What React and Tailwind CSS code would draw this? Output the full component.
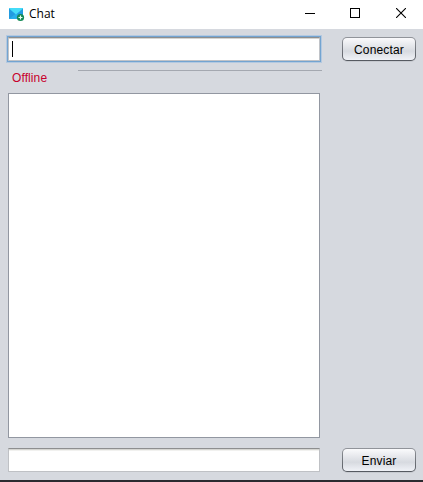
function MailIcon() {
  return (
    <svg width="16" height="14" viewBox="0 0 16 14" className="mt-px shrink-0">
      <rect x="0" y="0" width="14" height="11" rx="0.6" fill="#229be0" />
      <path d="M0 11 L7 5.5 L14 11Z" fill="#28aeea" />
      <path d="M0 0.5 Q0 0 0.6 0 H13.4 Q14 0 14 0.5 L7 6.5Z" fill="#45dcf8" />
      <circle cx="11.5" cy="9.5" r="3.6" fill="#138a55" />
      <path d="M11.5 7.5V11.5M9.5 9.5H13.5" stroke="#e9fff3" strokeWidth="1.2" />
    </svg>
  );
}

function TitleBar() {
  return (
    <header className="flex h-[29px] shrink-0 items-start bg-white pl-[9px]">
      <div className="flex h-7 flex-1 items-center gap-1">
        <MailIcon />
        <h1 className="font-['Open_Sans','Noto_Sans',sans-serif] text-[12px] leading-4 text-black">Chat</h1>
      </div>
      <div className="flex h-[26px] items-center pr-[17px] text-black">
        <svg width="10" height="10" viewBox="0 0 10 10" shapeRendering="crispEdges">
          <rect x="0" y="5" width="10" height="1" fill="currentColor" />
        </svg>
        <svg width="10" height="10" viewBox="0 0 10 10" shapeRendering="crispEdges" className="ml-[35px]">
          <rect x="0.5" y="0.5" width="9" height="9" fill="none" stroke="currentColor" />
        </svg>
        <svg width="10" height="10" viewBox="0 0 10 10" className="ml-9">
          <path d="M0 0L10 10M10 0L0 10" stroke="currentColor" strokeWidth="1.1" />
        </svg>
      </div>
    </header>
  );
}

function NimbusButton({ children }) {
  return (
    <button className="h-6 w-[74px] shrink-0 rounded-[5px] bg-linear-to-b from-[#92959b] to-[#555960] p-px text-[12px] tracking-[0.15px] text-black shadow-[0_1px_0_#c7cad0]">
      <span className="flex h-full items-center justify-center rounded-[4px] bg-linear-to-b from-[#fafafc] via-[#d7dae0] via-60% to-[#f0f2f7] pt-px">
        {children}
      </span>
    </button>
  );
}

export default function App() {
  return (
    <div className="flex h-[482px] w-[423px] flex-col overflow-hidden border-b-2 border-[#2b2b30] bg-[#d6d9df] font-['Liberation_Sans',Arial,sans-serif]">
      <TitleBar />
      <main className="flex flex-1 flex-col pt-2 pr-[7px] pl-2">
        <div className="flex h-6 gap-[22px]">
          <div className="flex w-[312px] shrink-0 border border-t-[#8d8e8f] border-r-[#c0c3c8] border-b-[#c0c3c8] border-l-[#c0c3c8] bg-white pt-[3px] pl-[3px] shadow-[inset_0_1px_0_#d5d5d1,0_0_0_1px_#73a4d1,0_0_0_2px_#b4c9e0]">
            <span className="h-4 w-px bg-black" />
          </div>
          <NimbusButton>Conectar</NimbusButton>
        </div>
        <div className="flex h-8 w-[314px] items-start pl-1">
          <span className="w-[66px] pt-[9px] text-[12px] leading-4 tracking-[0.1px] text-[#c8002c]">Offline</span>
          <span className="mt-[9px] h-px flex-1 bg-[#a4a8b0]" />
        </div>
        <section className="h-[345px] w-[312px] border border-[#9297a1] bg-white" />
        <div className="mt-[10px] flex h-6 gap-[22px]">
          <div className="w-[312px] shrink-0 border border-t-[#8d8e8f] border-r-[#bfc1c5] border-b-[#bfc1c5] border-l-[#bfc1c5] bg-white shadow-[inset_0_1px_0_#d5d5d1,inset_0_2px_0_#f1f1ef]" />
          <NimbusButton>Enviar</NimbusButton>
        </div>
      </main>
    </div>
  );
}
